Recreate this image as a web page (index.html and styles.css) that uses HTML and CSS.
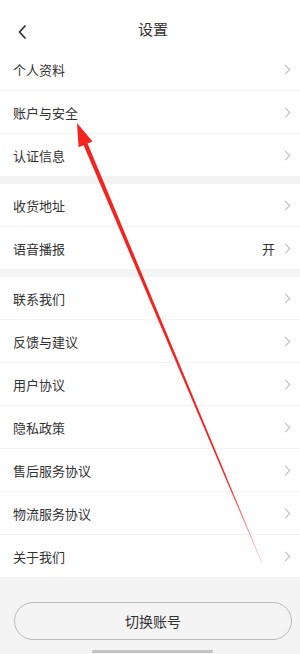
FILE: index.html
```html
<!DOCTYPE html>
<html lang="zh-CN">
<head>
    <meta charset="UTF-8">
    <meta name="viewport" content="width=device-width, initial-scale=1.0">
    <title>设置</title>
    <link rel="stylesheet" href="styles.css">
</head>
<body>
    <div class="page">
        <div class="header">
            <span class="back">
                <svg width="10" height="16" viewBox="0 0 10 16"><path d="M8 2 L2.5 8 L8 14" fill="none" stroke="#333" stroke-width="1.8" stroke-linecap="round" stroke-linejoin="round"/></svg>
            </span>
            <h1>设置</h1>
        </div>

        <div class="group">
            <div class="row"><span>个人资料</span><i class="arrow"></i></div>
            <div class="row"><span>账户与安全</span><i class="arrow"></i></div>
            <div class="row"><span>认证信息</span><i class="arrow"></i></div>
        </div>

        <div class="group">
            <div class="row"><span>收货地址</span><i class="arrow"></i></div>
            <div class="row"><span>语音播报</span><span class="value">开</span><i class="arrow"></i></div>
        </div>

        <div class="group">
            <div class="row"><span>联系我们</span><i class="arrow"></i></div>
            <div class="row"><span>反馈与建议</span><i class="arrow"></i></div>
            <div class="row"><span>用户协议</span><i class="arrow"></i></div>
            <div class="row"><span>隐私政策</span><i class="arrow"></i></div>
            <div class="row"><span>售后服务协议</span><i class="arrow"></i></div>
            <div class="row"><span>物流服务协议</span><i class="arrow"></i></div>
            <div class="row"><span>关于我们</span><i class="arrow"></i></div>
        </div>

        <div class="footer">
            <button class="switch">切换账号</button>
        </div>
        <div class="home-bar"></div>

        <svg class="pointer" viewBox="0 0 300 654" width="300" height="654">
            <defs>
                <linearGradient id="fade" x1="77" y1="124" x2="262" y2="563" gradientUnits="userSpaceOnUse">
                    <stop offset="0" stop-color="#f5231e"/>
                    <stop offset="0.8" stop-color="#f5231e"/>
                    <stop offset="1" stop-color="#f5231e" stop-opacity="0.2"/>
                </linearGradient>
            </defs>
            <polygon points="77,123 92.5,141.5 87.6,143.6 262.4,563 261.6,563 83.6,145.2 78.6,147.2" fill="url(#fade)"/>
        </svg>
    </div>
</body>
</html>
```

FILE: styles.css
```css
* {
    margin: 0;
    padding: 0;
    box-sizing: border-box;
}

body {
    font-family: "Noto Sans CJK SC", "Noto Sans", sans-serif;
    color: #333;
    background-color: #f4f4f4;
}

.page {
    position: relative;
    width: 300px;
    height: 654px;
    overflow: hidden;
    background-color: #f4f4f4;
}

.header {
    height: 48px;
    background-color: #fff;
    display: flex;
    align-items: center;
    justify-content: center;
    position: relative;
    padding-top: 10px;
    padding-left: 6px;
}

.back {
    position: absolute;
    left: 17px;
    top: 21px;
}

h1 {
    font-size: 15px;
    font-weight: normal;
    color: #333;
    line-height: 20px;
}

.group {
    background-color: #fff;
    margin-bottom: 8px;
}

.row {
    height: 43px;
    display: flex;
    align-items: center;
    padding: 0 11px 0 13px;
    border-bottom: 1px solid #f3f3f3;
    font-size: 13px;
}

.row:last-child {
    border-bottom: none;
    height: 42px;
}

.row span:first-child {
    flex: 1;
}

.value {
    margin-right: 7px;
    font-size: 13px;
}

.arrow {
    width: 7px;
    height: 7px;
    border-top: 1px solid #bbb;
    border-right: 1px solid #bbb;
    transform: rotate(45deg);
}

.footer {
    padding: 17px 8px 0 14px;
}

.switch {
    display: block;
    width: 278px;
    height: 38px;
    border: 1px solid #bbb;
    border-radius: 19px;
    background-color: #f4f4f4;
    font-family: "Noto Sans CJK SC", sans-serif;
    font-size: 14px;
    color: #333;
}

.home-bar {
    position: absolute;
    left: 92px;
    bottom: 1px;
    width: 121px;
    height: 3px;
    border-radius: 2px;
    background-color: #c2c2c2;
}

.pointer {
    position: absolute;
    left: 0;
    top: 0;
    pointer-events: none;
}
```
